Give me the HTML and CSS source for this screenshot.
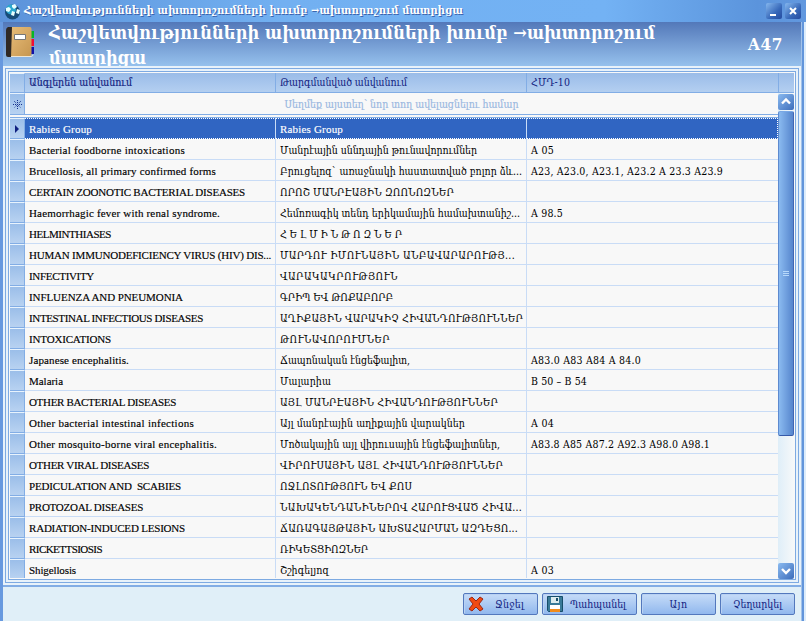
FILE: index.html
```html
<!DOCTYPE html>
<html lang="hy">
<head>
<meta charset="utf-8">
<title>Հաշվետվությունների ախտորոշումների խումբ</title>
<link rel="stylesheet" href="styles.css">
</head>
<body>
<div class="window">
  <div class="titlebar">
    <svg class="app-icon" width="17" height="17" viewBox="0 0 17 17"><circle cx="8.5" cy="9" r="7.5" fill="#174c78"/><circle cx="7" cy="6.5" r="5" fill="#2ba8cf"/><path d="M2 5l3-1 2 2-2 3-3-1zM8 2l3-1 2 3-3 2-2-2zM13 6l3 1-1 4-3-1zM8 8l3 1-1 4-3-1z" fill="#e8ffff"/></svg>
    <span class="title" data-w="439">Հաշվետվությունների ախտորոշումների խումբ →ախտորոշում մատրիցա</span>
    <div class="controls">
      <span class="ctl"><svg width="16" height="16"><path d="M4 12h6" stroke="#fff" stroke-width="2"/></svg></span>
      <span class="ctl"><svg width="16" height="16"><path d="M5 5l6 6M11 5l-6 6" stroke="#fff" stroke-width="2"/></svg></span>
    </div>
  </div>
  <div class="banner">
    <svg class="book" width="29" height="32" viewBox="0 0 29 32"><defs><linearGradient id="b" x2="1" y2="1"><stop stop-color="#e8bd79"/><stop offset="1" stop-color="#c69650"/></linearGradient></defs><path d="M24 5h4v7h-4z" fill="#08b526"/><path d="M24 13h4v7h-4z" fill="#f10c32"/><path d="M24 21h4v7h-4z" fill="#1010a8"/><path d="M4 1h20q1.500 0 1.500 2v25q0 2-2 2H4z" fill="url(#b)"/><path d="M5 30.500h20q2 0 2-2" fill="none" stroke="#eee6d5"/><path d="M2 1h4L5 31H2q-2 0-2-2V4q0-2 2-3z" fill="#2f2925"/><path d="M8.500 8.500h11v5h-11z" fill="#fff" stroke="#777"/></svg>
    <div class="heading"><div><span data-w="606">Հաշվետվությունների ախտորոշումների խումբ →ախտորոշում</span></div><div><span data-w="97">մատրիցա</span></div></div>
    <div class="code"><span data-w="35">A47</span></div>
  </div>
  <div class="frame"><div class="frame-inner"><div class="grid">
    <div class="row head"><i></i><b><span data-w="103">Անգլերեն անվանում</span></b><b><span data-w="127">Թարգմանված անվանում</span></b><b><span data-w="39">ՀՄԴ-10</span></b><b class="corner"></b></div>
    <div class="body">
      <div class="rows">
        <div class="row new"><i><svg width="9" height="9"><path d="M1 1l7 7M8 1L1 8M4.500 0v9M0 4.500h9" stroke="#17318c" stroke-dasharray="1 1"/></svg></i><b><span data-w="234">Սեղմեք այստեղ՝ նոր տող ավելացնելու համար</span></b></div>
        <div class="gap"></div>
        <div class="row sel"><i><svg width="5" height="8"><path d="M0 0l4 4-4 4z" fill="#102080"/></svg></i><b><span data-w="63">Rabies Group</span></b><b><span data-w="63">Rabies Group</span></b><b></b></div>
        <div class="row"><i></i><b><span data-w="156">Bacterial foodborne intoxications</span></b><b><span data-w="197">Մանրէային սննդային թունավորումներ</span></b><b><span data-w="23">A 05</span></b></div>
        <div class="row"><i></i><b><span data-w="187">Brucellosis, all primary confirmed forms</span></b><b><span data-w="242">Բրուցելոզ` առաջնակի հաստատված բոլոր ձև...</span></b><b><span data-w="192">A23, A23.0, A23.1, A23.2 A 23.3 A23.9</span></b></div>
        <div class="row"><i></i><b><span data-w="216">CERTAIN ZOONOTIC BACTERIAL DISEASES</span></b><b><span data-w="174">ՈՐՈՇ ՄԱՆՐԷԱՅԻՆ ԶՈՈՆՈԶՆԵՐ</span></b><b></b></div>
        <div class="row"><i></i><b><span data-w="191">Haemorrhagic fever with renal syndrome.</span></b><b><span data-w="240">Հեմոռագիկ տենդ երիկամային համախտանիշ...</span></b><b><span data-w="32">A 98.5</span></b></div>
        <div class="row"><i></i><b><span data-w="82">HELMINTHIASES</span></b><b><span data-w="122">Հ Ե Լ Մ Ի Ն Թ Ո Զ Ն Ե Ր</span></b><b></b></div>
        <div class="row"><i></i><b><span data-w="242">HUMAN IMMUNODEFICIENCY VIRUS (HIV) DIS...</span></b><b><span data-w="235">ՄԱՐԴՈՒ ԻՄՈՒՆԱՅԻՆ ԱՆԲԱՎԱՐԱՐՈՒԹՅ...</span></b><b></b></div>
        <div class="row"><i></i><b><span data-w="65">INFECTIVITY</span></b><b><span data-w="118">ՎԱՐԱԿԱԿՐՈՒԹՅՈՒՆ</span></b><b></b></div>
        <div class="row"><i></i><b><span data-w="154">INFLUENZA AND PNEUMONIA</span></b><b><span data-w="113">ԳՐԻՊ ԵՎ ԹՈՔԱԲՈՐԲ</span></b><b></b></div>
        <div class="row"><i></i><b><span data-w="174">INTESTINAL INFECTIOUS DISEASES</span></b><b><span data-w="243">ԱՂԻՔԱՅԻՆ ՎԱՐԱԿԻՉ ՀԻՎԱՆԴՈՒԹՅՈՒՆՆԵՐ</span></b><b></b></div>
        <div class="row"><i></i><b><span data-w="82">INTOXICATIONS</span></b><b><span data-w="110">ԹՈՒՆԱՎՈՐՈՒՄՆԵՐ</span></b><b></b></div>
        <div class="row"><i></i><b><span data-w="100">Japanese encephalitis.</span></b><b><span data-w="130">Ճապոնական էնցեֆալիտ,</span></b><b><span data-w="110">A83.0 A83 A84 A 84.0</span></b></div>
        <div class="row"><i></i><b><span data-w="34">Malaria</span></b><b><span data-w="51">Մալարիա</span></b><b><span data-w="56">B 50 – B 54</span></b></div>
        <div class="row"><i></i><b><span data-w="147">OTHER BACTERIAL DISEASES</span></b><b><span data-w="218">ԱՅԼ ՄԱՆՐԷԱՅԻՆ ՀԻՎԱՆԴՈՒԹՅՈՒՆՆԵՐ</span></b><b></b></div>
        <div class="row"><i></i><b><span data-w="165">Other bacterial intestinal infections</span></b><b><span data-w="185">Այլ մանրէային աղիքային վարակներ</span></b><b><span data-w="23">A 04</span></b></div>
        <div class="row"><i></i><b><span data-w="188">Other mosquito-borne viral encephalitis.</span></b><b><span data-w="220">Մոծակային այլ վիրուսային էնցեֆալիտներ,</span></b><b><span data-w="179">A83.8 A85 A87.2 A92.3 A98.0 A98.1</span></b></div>
        <div class="row"><i></i><b><span data-w="120">OTHER VIRAL DISEASES</span></b><b><span data-w="223">ՎԻՐՈՒՍԱՅԻՆ ԱՅԼ ՀԻՎԱՆԴՈՒԹՅՈՒՆՆԵՐ</span></b><b></b></div>
        <div class="row"><i></i><b><span data-w="152">PEDICULATION AND  SCABIES</span></b><b><span data-w="132">ՈՋԼՈՏՈՒԹՅՈՒՆ ԵՎ ՔՈՍ</span></b><b></b></div>
        <div class="row"><i></i><b><span data-w="114">PROTOZOAL DISEASES</span></b><b><span data-w="242">ՆԱԽԱԿԵՆԴԱՆԻՆԵՐՈՎ ՀԱՐՈՒՑՎԱԾ ՀԻՎԱ...</span></b><b></b></div>
        <div class="row"><i></i><b><span data-w="156">RADIATION-INDUCED LESIONS</span></b><b><span data-w="238">ՃԱՌԱԳԱՅԹԱՅԻՆ ԱԽՏԱՀԱՐՄԱՆ ԱԶԴԵՑՈ...</span></b><b></b></div>
        <div class="row"><i></i><b><span data-w="73">RICKETTSIOSIS</span></b><b><span data-w="88">ՌԻԿԵՏՑԻՈԶՆԵՐ</span></b><b></b></div>
        <div class="row last"><i></i><b><span data-w="47">Shigellosis</span></b><b><span data-w="49">Շշիգելյոզ</span></b><b><span data-w="23">A 03</span></b></div>
      </div>
      <div class="scroll">
        <span class="arrow"><svg width="16" height="16"><path d="M4 9.500l4-4 4 4" fill="none" stroke="#fff" stroke-width="2.400"/></svg></span>
        <span class="thumb"><svg width="6" height="6"><path d="M0 .5h6M0 2.500h6M0 4.500h6" stroke="#b6d8fa"/></svg></span>
        <span class="arrow down"><svg width="16" height="16"><path d="M4 6l4 4 4-4" fill="none" stroke="#fff" stroke-width="2.400"/></svg></span>
      </div>
    </div>
  </div></div></div>
  <div class="footer">
    <button class="del"><svg width="16" height="16" viewBox="0 0 16 16"><path d="M1 3l3-2 4 4 4-4 3 2-4 5 4 5-3 2-4-4-4 4-3-2 4-5z" fill="#f04a12" stroke="#9b2815"/></svg><span data-w="29">Ջնջել</span></button>
    <button class="save"><svg width="16" height="16" viewBox="0 0 16 16"><path d="M.5.5h15v15h-14l-1-1z" fill="#397a98" stroke="#174e6a"/><path d="M4 1h8v6H4z" fill="#dcebed"/><path d="M9 2h2v3H9z" fill="#174e6a"/><path d="M3 9h10v4H3z" fill="#fff"/><path d="M3 13h10v3H3z" fill="#f18b19"/></svg><span data-w="56">Պահպանել</span></button>
    <button class="yes"><span data-w="18">Այո</span></button>
    <button class="cancel"><span data-w="49">Չեղարկել</span></button>
  </div>
</div>
<script src="fit.js"></script>
</body>
</html>
```
FILE: fit.js
```js
document.querySelectorAll('[data-w]').forEach(function (el) {
  var natural = el.getBoundingClientRect().width;
  var count = Array.from(el.textContent).length;
  el.style.letterSpacing = ((Number(el.dataset.w) - natural) / count) + 'px';
});
```
FILE: styles.css
```css
* { box-sizing: border-box; }
body { margin: 0; overflow: hidden; font: 11px/20px "Liberation Serif", "DejaVu Serif Condensed", "DejaVu Serif", serif; color: #000; }
[data-w] { white-space: pre; display: inline-block; font-variant-ligatures: none; }
.window { width: 806px; height: 621px; display: flex; flex-direction: column; padding: 0 5px 0 3px; background: linear-gradient(90deg, #6799df 0 3px, #e2eff8 3px 801px, #6295db 802px 804px, #dcecfb 804px); }
.titlebar { height: 22px; margin: 0 -5px 0 -3px; padding: 0 5px; display: flex; align-items: center; background: linear-gradient(90deg, #5c93da, #72b0f1 35%, #73b2f4 75%, #5b94dc 94%, #6298df); }
.app-icon { margin: 0 3px 0 -1px; }
.title { color: #fff; font: bold 11px/20px "DejaVu Serif Condensed", "DejaVu Serif", serif; text-shadow: 1px 1px #3c65af; }
.controls { display: flex; gap: 3px; margin-left: auto; margin-right: 0; }
.ctl { width: 16px; height: 16px; border-radius: 2px; background: linear-gradient(135deg, #86b8ef, #3768b9 60%, #254b9f); }
.ctl svg, .arrow svg { display: block; }
.banner { height: 44px; overflow: hidden; display: flex; padding-left: 3px; background: linear-gradient(#5378b9, #96c1ed); color: #fff; }
.book { margin: 4px 14px 0 0; flex: none; }
.heading { width: 660px; font: bold 18px/25px "DejaVu Serif Condensed", "DejaVu Serif", serif; margin-top: -2px; height: 50px; }
.code { margin-left: 39px; font: bold 17px/44px "DejaVu Serif Condensed", "DejaVu Serif", serif; }
.frame { height: 521px; padding: 2px; background: #e8f2fa; border-bottom: 2px solid #82ade5; }
.frame-inner { height: 515px; border: 1px solid #7daae2; padding: 2px; }
.grid { border: 1px solid #7daae2; padding: 1px 1px 0; height: 509px; overflow: hidden; background: #f8f8f8; }
.row { display: grid; grid-template-columns: 15px 251px 251px 1fr; height: 21px; }
.row i { display: flex; align-items: center; justify-content: center; background: linear-gradient(#9bbee9, #b8d2f1); border-top: 1px solid #e8f3fd; border-right: 1px solid #82ade5; border-bottom: 1px solid #82ade5; }
.row b { font-weight: normal; border-right: 1px solid #c9dcf6; border-bottom: 1px solid #c9dcf6; padding: 1px 0 0 4px; line-height: 20px; overflow: hidden; white-space: nowrap; }
.row b:nth-child(2) [data-w] { -webkit-text-stroke: .15px currentColor; }
.row b:nth-child(3) [data-w], .row b:nth-child(4) [data-w], .head [data-w], .new [data-w] { font-family: "DejaVu Serif Condensed", "DejaVu Serif", serif; font-size: 10.5px; }
.row.head [data-w], .row.new [data-w] { font-family: "DejaVu Serif Condensed", "DejaVu Serif", serif; font-size: 10.5px; -webkit-text-stroke: 0; }
.row.head { grid-template-columns: 15px 251px 251px 252px 1fr; height: 20px; background: linear-gradient(#9abce8, #b5d0f1); }
.row.head b { background: none; border-color: #82ade5; line-height: 18px; color: #102080; padding-top: 0; }
.row.head b.corner { border-right: 0; }
.body { display: flex; height: 486px; }
.rows { flex: 1; min-width: 0; }
.row.new { grid-template-columns: 15px 1fr; height: 22px; }
.row.new b { color: #98b7df; text-align: center; border-right: 0; border-color: #82ade5; line-height: 20px; padding-left: 0; }
.gap { height: 3px; background: #f8f8f8; border-bottom: 1px solid #82ade5; }
.row.sel b { background: #3065c2; color: #fff; border-top: 1px dotted #fff; border-bottom: 1px dotted #fff; line-height: 19px; }
.row b:nth-child(4) { border-right: 0; }
.row.head b:nth-child(4) { border-right: 1px solid #82ade5; }
.sel b:nth-child(4) { border-right: 1px dotted #fff; }
.row.sel b:nth-child(3) [data-w] { font: 11px/19px "Liberation Serif", serif; -webkit-text-stroke: .15px currentColor; }
.row.last { height: 19px; }
.last b, .last i { border-bottom: 0; }
.scroll { width: 16px; display: flex; flex-direction: column; padding-top: 1px; background: linear-gradient(90deg, #dfeef8, #f6f8f9); }
.arrow { width: 16px; height: 16px; border-radius: 2px; background: linear-gradient(135deg, #8abaf0, #3d6dbb); flex: none; }
.thumb { height: 325px; margin-top: 1px; display: flex; align-items: center; justify-content: center; border: 1px solid; border-color: #78a7e5 #4267b4 #3559a8 #5d8ad0; border-radius: 2px; background: linear-gradient(90deg, #8abaf0, #5685cd); }
.down { margin-top: auto; }
.footer { flex: 1; display: flex; align-items: flex-start; justify-content: flex-end; gap: 4px; padding: 6px 6px 0 0; background: #e0eff8; }
button { height: 22px; padding: 0; display: flex; align-items: center; justify-content: flex-start; border: 1px solid #5378bd; border-radius: 2px; background: linear-gradient(#c6dcf8, #91b8ee); color: #102080; font: 10.5px/18px "DejaVu Serif Condensed", "DejaVu Serif", serif; box-shadow: inset 1px 1px #b9d2f3; }
.del { width: 75px; gap: 11px; padding-left: 4px; }
.save { width: 95px; gap: 7px; padding-left: 4px; }
.yes, .cancel { width: 75px; justify-content: center; }
```
